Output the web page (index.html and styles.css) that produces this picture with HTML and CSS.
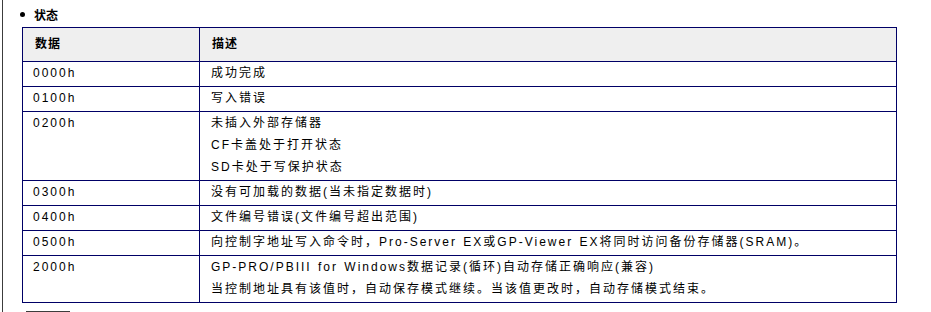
FILE: index.html
```html
<!DOCTYPE html>
<html lang="zh-CN">
<head>
<meta charset="utf-8">
<title>状态</title>
<link rel="stylesheet" href="styles.css">
</head>
<body>
<div class="frame">
  <div class="title"><span class="bullet"></span><span class="title-text">状态</span></div>
  <table class="status">
    <thead>
      <tr><th class="c1">数据</th><th>描述</th></tr>
    </thead>
    <tbody>
      <tr><td>0000h</td><td>成功完成</td></tr>
      <tr><td>0100h</td><td>写入错误</td></tr>
      <tr><td>0200h</td><td>未插入外部存储器<br>CF卡盖处于打开状态<br>SD卡处于写保护状态</td></tr>
      <tr><td>0300h</td><td>没有可加载的数据(当未指定数据时)</td></tr>
      <tr><td>0400h</td><td>文件编号错误(文件编号超出范围)</td></tr>
      <tr><td>0500h</td><td>向控制字地址写入命令时，Pro-Server EX或GP-Viewer EX将同时访问备份存储器(SRAM)。</td></tr>
      <tr><td>2000h</td><td>GP-PRO/PBIII for Windows数据记录(循环)自动存储正确响应(兼容)<br>当控制地址具有该值时，自动保存模式继续。当该值更改时，自动存储模式结束。</td></tr>
    </tbody>
  </table>
  <div class="button-box"></div>
</div>
</body>
</html>
```
FILE: styles.css
```css
html, body {
  margin: 0;
  padding: 0;
  background: #ffffff;
}
body {
  font-family: "Liberation Sans", Arial, "Noto Sans CJK SC", sans-serif;
  font-size: 12px;
  color: #000000;
  overflow: hidden;
}
.frame {
  margin-left: 2px;
  border-left: 1px solid #3c3c3c;
  padding-left: 17px;
  height: 330px;
}
.title {
  display: flex;
  align-items: center;
  height: 20px;
  padding-top: 4px;
  padding-bottom: 3px;
}
.bullet {
  width: 5px;
  height: 5px;
  border-radius: 50%;
  background: #000000;
  margin-right: 9px;
}
.title-text {
  font-weight: bold;
  font-size: 12px;
}
.status {
  margin-left: 2px;
  width: 875px;
  border-collapse: collapse;
  border: 1px solid #000066;
}
.status th,
.status td {
  border: 1px solid #000066;
  text-align: left;
  vertical-align: top;
}
.status th {
  background: #efefef;
  font-weight: bold;
  line-height: 33px;
  padding: 0 11px 0 12px;
  letter-spacing: 1px;
}
.status th.c1 {
  width: 153px;
}
.status td {
  line-height: 22px;
  padding: 0 10px 2px 11px;
  letter-spacing: 2px;
  word-spacing: 1px;
}
.status td:first-child {
  padding-left: 10px;
}
.button-box {
  margin-top: 8px;
  margin-left: 6px;
  width: 42px;
  height: 20px;
  border: 1px solid #3c3c3c;
}
```
